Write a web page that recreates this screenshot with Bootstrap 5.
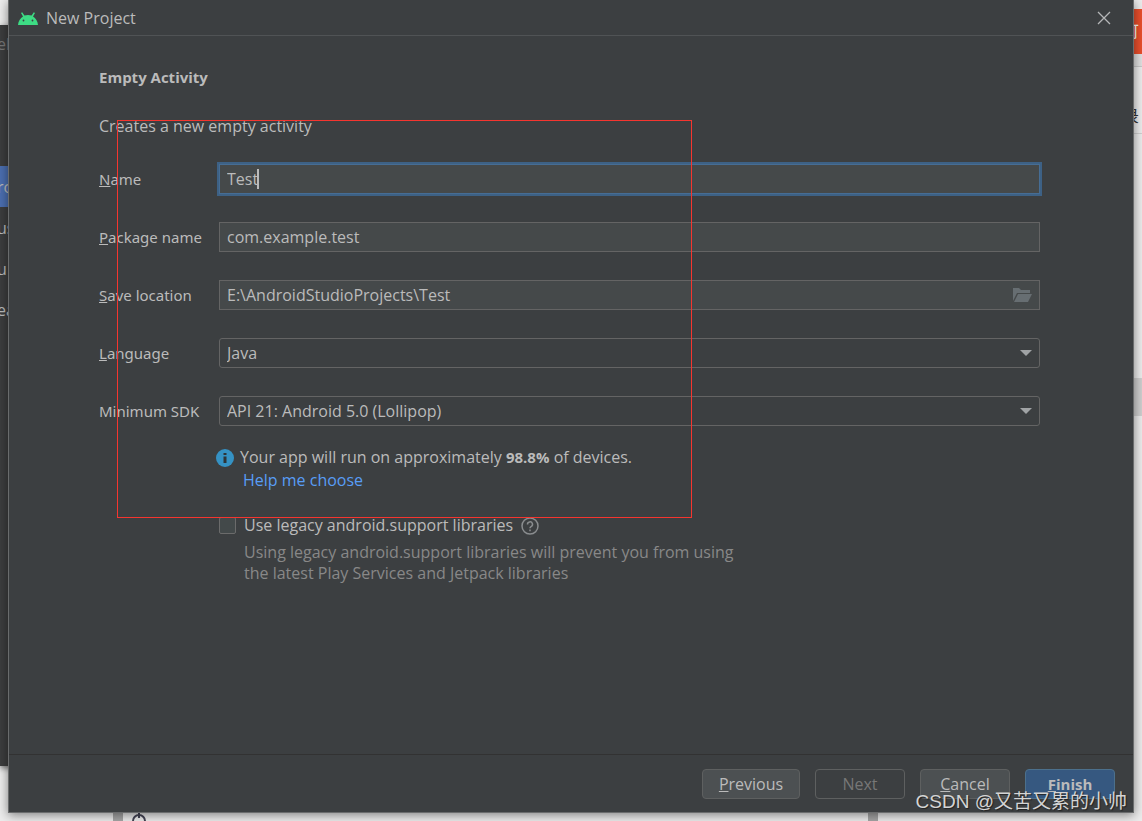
<!DOCTYPE html>
<html lang="en">
<head>
<meta charset="utf-8">
<meta name="viewport" content="width=device-width, initial-scale=1">
<title>New Project</title>
<link href="https://cdn.jsdelivr.net/npm/bootstrap@5.3.0/dist/css/bootstrap.min.css" rel="stylesheet">
<style>
  body { font-family: "Open Sans", "Noto Sans", "Noto Sans CJK SC", sans-serif; font-size: 16px; line-height: 21px; color: #bbb; background: #ececec; }
  b, .fw-bold { font-size: 15px; }
  .desktop { min-height: 100vh; padding: 0 8px 8px; }
  /* windows lying behind the dialog */
  .ide-window { left: 0; top: 25px; bottom: 55px; width: 60px; background: #3c3d3e; box-shadow: 0 2px 6px #0008; }
  .ide-window span { position: absolute; left: 0; height: 41px; width: 60px; line-height: 43px; text-indent: -3px; overflow: hidden; }
  .ide-window .chosen { background: #4b6eaf; }
  .browser { top: 0; right: 0; bottom: 0; width: 9px; background: #ececec; }
  .browser span { position: absolute; right: 0; width: 9px; overflow: hidden; }
  .browser-tab { top: 9px; height: 45px; line-height: 44px; background: #e94f2c; color: #fff; text-indent: -10px; }
  .browser-bar { top: 54px; height: 13px; background: #e0e0e0; border-bottom: 1px solid #c8c8c8; }
  .browser-menu { top: 100px; height: 34px; line-height: 32px; color: #333; border-bottom: 1px solid #d0d0d0; text-indent: -10px; }
  .browser-thumb { top: 378px; height: 38px; background: #cfcfcf; }
  .page-edge { bottom: 0; height: 20px; width: 10px; background: #a5a5a5; }
  .page-pin { left: 131px; bottom: -8px; }
  .dialog-window { background: #3c3f41; border: 1px solid #6a6c6d; border-top: 0; box-shadow: 0 2px 10px #0007; min-height: calc(100vh - 8px); }
  .title-bar { height: 36px; border-bottom: 1px solid #505355; padding: 1px 21px 0 9px; }
  .title-bar button { width: 16px; height: 16px; color: #b5b7b8; }
  .form-area { padding: 31px 93px 20px 90px; }
  .field-grid { display: grid; grid-template-columns: 120px 1fr; row-gap: 28px; align-items: center; margin-top: 27px; }
  .field-grid label { font-family: "Noto Sans", "Open Sans", sans-serif; font-size: 15px; }
  .form-control, .form-select { height: 30px; padding: 0 7px; font-size: 16px; line-height: 21px; color: #bbb; background: #45494a; border: 1px solid #646464; border-radius: 0; }
  .form-control:focus { color: #bbb; background: #45494a; }
  .form-select { background: #3c3f41; border-radius: 3px; }
  .active-field, .active-field:focus { border-color: #466d94; box-shadow: 0 0 0 2px #3d6185; }
  .caret { left: 38px; top: 5px; width: 2px; height: 20px; background: #bbb; }
  .field-icon { right: 8px; top: 8px; pointer-events: none; }
  .notes { padding-left: 117px; margin-top: 21px; }
  .notes a { color: #589df6; }
  .info-text { margin-left: 6px; }
  .help-line { margin: 2px 0 0 27px; }
  .legacy-line { padding-left: 3px; }
  .form-check-input { width: 17px; height: 17px; margin: 0; background: #43494a; border: 1px solid #6b6b6b; }
  .form-check-input[type=checkbox] { border-radius: 2px; }
  .question-mark { margin-left: 8px; }
  .hint { color: #888; padding-left: 28px; margin-top: 6px; }
  .footer-bar { border-top: 1px solid #323232; padding: 14px 18px 13px; gap: 15px; }
  .footer-bar .btn { width: 90px; height: 30px; padding: 0; font-size: 16px; line-height: 26px; color: #bbb; background: #4c5052; border: 1px solid #5e6060; border-radius: 4px; }
  .footer-bar .btn-wide { width: 98px; }
  .footer-bar .btn:disabled { color: #777; background: transparent; opacity: 1; }
  .footer-bar .btn-main { font-size: 15px; background: #365880; border-color: #4c708c; }
  .selection-frame { left: 117px; top: 120px; width: 575px; height: 398px; border: 1px solid #f5352f; pointer-events: none; }
  .watermark { right: 15px; bottom: 5px; font-family: "Liberation Sans", "Noto Sans CJK SC", sans-serif; font-size: 19px; line-height: 28px; color: #d4d4d4; text-shadow: 1px 1px 1px #222; pointer-events: none; }
</style>
</head>
<body>
<div class="desktop position-relative d-flex flex-column overflow-hidden">
  <div class="browser position-absolute" aria-hidden="true">
    <span class="browser-tab">可</span>
    <span class="browser-bar"></span>
    <span class="browser-menu">录</span>
    <span class="browser-thumb"></span>
  </div>
  <div class="ide-window position-absolute" aria-hidden="true">
    <span style="top:-2px; color:#777">el</span>
    <span class="chosen" style="top:141px">ro</span>
    <span style="top:182px">us</span>
    <span style="top:223px">u</span>
    <span style="top:264px">ea</span>
  </div>
  <div class="page-edge position-absolute" style="left:113px"></div>
  <div class="page-edge position-absolute" style="left:868px"></div>
  <svg class="page-pin position-absolute" width="16" height="18" viewBox="0 0 16 18" fill="none" stroke="#445" stroke-width="2"><circle cx="8" cy="10" r="6"/><path d="M8 1v6"/></svg>

  <main class="dialog-window position-relative d-flex flex-column flex-grow-1">
    <header class="title-bar d-flex align-items-center">
      <svg width="20" height="13" viewBox="0 0 20 13"><path d="M0 13C.3 9.300 2.300 6.300 5 4.600L3 1 4.200.2 6.400 3.600A10.500 10.500 0 0 1 13.600 3.600L15.800.2 17 1 15 4.600C17.700 6.300 19.700 9.300 20 13Z" fill="#3ddc84"/><circle cx="5.500" cy="8.500" r=".9" fill="#3c3f41"/><circle cx="14.500" cy="8.500" r=".9" fill="#3c3f41"/></svg>
      <span class="ms-2">New Project</span>
      <button type="button" class="btn p-0 border-0 ms-auto d-flex align-items-center justify-content-center" aria-label="Close"><svg width="14" height="14" viewBox="0 0 14 14" stroke="currentColor" stroke-width="1.300"><path d="M1 1l12 12M13 1L1 13"/></svg></button>
    </header>

    <form class="flex-grow-1 d-flex flex-column">
      <div class="form-area flex-grow-1">
        <div class="fw-bold">Empty Activity</div>
        <p class="mb-0 mt-4 pt-1">Creates a new empty activity</p>
        <div class="field-grid">
          <label for="name"><u>N</u>ame</label>
          <div class="position-relative"><input id="name" class="form-control active-field" value="Test"><span class="caret position-absolute"></span></div>
          <label for="package"><u>P</u>ackage name</label>
          <input id="package" class="form-control" value="com.example.test">
          <label for="location"><u>S</u>ave location</label>
          <div class="position-relative"><input id="location" class="form-control" value="E:\AndroidStudioProjects\Test">
            <svg class="field-icon position-absolute" width="19" height="15" viewBox="0 0 19 15" fill="#676e72"><path d="M0 13V0h6l2 2h9v3H4z"/><path d="M5 6h14l-4 8H1z"/></svg></div>
          <label for="language"><u>L</u>anguage</label>
          <div class="position-relative"><select id="language" class="form-select"><option>Java</option></select>
            <svg class="field-icon position-absolute" width="12" height="14" viewBox="0 0 12 14" fill="#a0a3a5"><path d="M0 4h12L6 10z"/></svg></div>
          <label for="sdk">Minimum SDK</label>
          <div class="position-relative"><select id="sdk" class="form-select"><option>API 21: Android 5.0 (Lollipop)</option></select>
            <svg class="field-icon position-absolute" width="12" height="14" viewBox="0 0 12 14" fill="#a0a3a5"><path d="M0 4h12L6 10z"/></svg></div>
        </div>

        <div class="notes">
          <div class="d-flex align-items-center">
            <svg width="18" height="18" viewBox="0 0 18 18"><circle cx="9" cy="9" r="9" fill="#3592c4"/><path d="M7.500 4h3v2h-3zM7.500 7.500h3V14h-3z" fill="#2e3437"/></svg>
            <span class="info-text">Your app will run on approximately <b>98.8%</b> of devices.</span>
          </div>
          <div class="help-line"><a href="#" class="text-decoration-none">Help me choose</a></div>
          <div class="legacy-line d-flex align-items-center mt-4">
            <input id="legacy" type="checkbox" class="form-check-input flex-shrink-0">
            <label for="legacy" class="ms-2">Use legacy android.support libraries</label>
            <svg class="question-mark" width="18" height="18" viewBox="0 0 18 18" fill="none" stroke="#8a8d8f" stroke-width="1.500"><circle cx="9" cy="9" r="8"/><path d="M6.500 7.500a2.500 2.500 0 1 1 3.600 2.100c-.8.500-1.100.8-1.100 1.700M9 12.600v1.600"/></svg>
          </div>
          <div class="hint">Using legacy android.support libraries will prevent you from using<br>the latest Play Services and Jetpack libraries</div>
        </div>
      </div>

      <footer class="footer-bar d-flex justify-content-end">
        <button type="button" class="btn btn-wide"><u>P</u>revious</button>
        <button type="button" class="btn" disabled>Next</button>
        <button type="button" class="btn"><u>C</u>ancel</button>
        <button type="submit" class="btn btn-main fw-bold"><u>F</u>inish</button>
      </footer>
    </form>
  </main>
  <div class="selection-frame position-absolute"></div>
  <div class="watermark position-absolute">CSDN @又苦又累的小帅</div>
</div>
<script src="https://cdn.jsdelivr.net/npm/bootstrap@5.3.0/dist/js/bootstrap.bundle.min.js"></script>
</body>
</html>
